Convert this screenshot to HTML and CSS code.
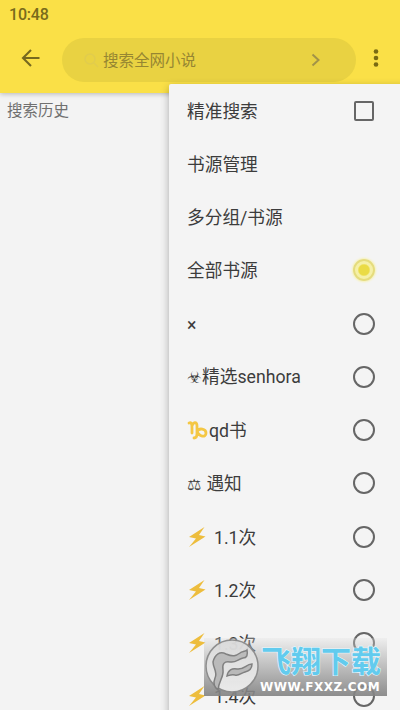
FILE: index.html
```html
<!DOCTYPE html>
<html lang="zh-CN">
<head>
<meta charset="utf-8">
<title>搜索</title>
<link rel="stylesheet" href="styles.css">
</head>
<body>
<div class="screen">
  <header class="header">
    <div class="status">10:48</div>
    <div class="toolbar">
      <svg class="back" viewBox="0 0 20 20"><path d="M18.500 10H2.500M10 2L2 10l8 8"/></svg>
      <div class="search">
        <svg class="glass" viewBox="0 0 16 16"><circle cx="7" cy="7" r="5"/><path d="M11 11l4 4"/></svg>
        <span class="hint">搜索全网小说</span>
        <svg class="go" viewBox="0 0 10 14"><path d="M1.500 1.500L7.500 7l-6 5.500"/></svg>
      </div>
      <svg class="more" viewBox="0 0 6 20"><circle cx="3" cy="3.500" r="2.300"/><circle cx="3" cy="10" r="2.300"/><circle cx="3" cy="16.500" r="2.300"/></svg>
    </div>
  </header>
  <div class="history">搜索历史</div>

  <div class="menu">
    <div class="item"><span>精准搜索</span><i class="check"></i></div>
    <div class="item"><span>书源管理</span></div>
    <div class="item"><span>多分组/书源</span></div>
    <div class="item"><span>全部书源</span><i class="radio on"></i></div>
    <div class="item"><span>×</span><i class="radio"></i></div>
    <div class="item"><span><span class="symbol">☣</span>精选senhora</span><i class="radio"></i></div>
    <div class="item"><svg class="capricorn" viewBox="0 0 21 20"><path d="M2 3C5 2 5 5 5 8v5M5 6C6 2 10 1 10 6v8c0 3-1 4-3 4M10 12c2-5 9-3 9 1 0 5-7 4-9-2"/></svg><span>qd书</span><i class="radio"></i></div>
    <div class="item"><span><span class="symbol">⚖</span> 遇知</span><i class="radio"></i></div>
    <div class="item"><svg class="bolt" viewBox="0 0 20 20"><path d="M17.500 0L2 10l7 1.500L2 20l16.500-10.500L12 8z"/></svg><span>1.1次</span><i class="radio"></i></div>
    <div class="item"><svg class="bolt" viewBox="0 0 20 20"><path d="M17.500 0L2 10l7 1.500L2 20l16.500-10.500L12 8z"/></svg><span>1.2次</span><i class="radio"></i></div>
    <div class="item"><svg class="bolt" viewBox="0 0 20 20"><path d="M17.500 0L2 10l7 1.500L2 20l16.500-10.500L12 8z"/></svg><span>1.3次</span><i class="radio"></i></div>
    <div class="item"><svg class="bolt" viewBox="0 0 20 20"><path d="M17.500 0L2 10l7 1.500L2 20l16.500-10.500L12 8z"/></svg><span>1.4次</span><i class="radio"></i></div>
  </div>

  <div class="badge">
    <svg class="emblem" viewBox="0 0 56 56">
      <defs><linearGradient id="disc" x1="0" y1="0" x2="0" y2="1"><stop offset="0" stop-color="#dadada"/><stop offset="1" stop-color="#efefef"/></linearGradient></defs>
      <circle cx="28" cy="28" r="26" fill="url(#disc)" stroke="#8b8b8b" stroke-width="1.500"/>
      <path class="wing" d="M9 24C11 16 16 13 22 16C29 19 32 18 36 15C38 13 41 14 43 12C44 17 43 20 39 20C34 21 32 25 26 24C20 23 18 26 19 32C20 39 15 42 14 52C10 49 9 45 11 40C14 34 9 30 9 24Z"/>
      <path class="wing" d="M23 38C24 32 28 30 33 31C40 32 42 26 48 26C48 31 45 33 41 34C37 35 35 38 31 37C28 36 26 37 23 38Z"/>
    </svg>
    <div class="brand"><div class="name">飞翔下载</div><div class="site">WWW.FXXZ.COM</div></div>
  </div>
</div>
</body>
</html>
```
FILE: styles.css
```css
* { box-sizing: border-box; }
body { margin: 0; background: #f3f3f3; font-family: Roboto, "Noto Sans CJK SC", sans-serif; }
.screen { position: relative; width: 400px; height: 710px; overflow: hidden; background: #f3f3f3; }
.header { height: 93px; background: #fae047; box-shadow: 0 1px 5px rgba(0,0,0,.25); }
.status { height: 38px; padding: 5px 0 0 9px; font-size: 16px; line-height: 19px; font-weight: 500; letter-spacing: -.2px; color: #796b1b; }
.toolbar { display: flex; align-items: center; height: 44px; padding-left: 21px; }
.back { width: 20px; height: 20px; margin: -4px 21px 0 0; fill: none; stroke: #76691f; stroke-width: 2.1; }
.search { display: flex; align-items: center; width: 294px; height: 44px; border-radius: 22px; padding-left: 21px; background: #e9d242; }
.glass { width: 16px; height: 16px; margin-right: 4px; fill: none; stroke: #e1cc4d; stroke-width: 1.5; }
.hint { width: 208px; padding-top: 1px; font-size: 15.5px; line-height: 22px; color: #968632; }
.go { width: 10px; height: 14px; fill: none; stroke: #a29348; stroke-width: 2; }
.more { width: 6px; height: 20px; margin: -4px 0 0 17px; fill: #796a13; }
.history { padding: 7px 7px; font-size: 15.5px; line-height: 23px; color: #707070; }
.menu { position: absolute; left: 169px; top: 84px; width: 240px; height: 640px; border-radius: 2px; background: #f4f4f4; box-shadow: 0 3px 9px rgba(0,0,0,.3); }
.item { display: flex; align-items: center; height: 53.25px; padding: 0 34px 0 18px; font-size: 17.7px; line-height: 24px; color: #3c3c3c; white-space: pre; }
.item > span { padding-top: 2px; }
.radio, .check { width: 22px; height: 22px; margin-left: auto; border: 2px solid #666; }
.radio { border-radius: 50%; }
.check { width: 20px; height: 20px; margin-right: 1px; border-radius: 2px; }
.on { border-color: #e5dc7c; background: radial-gradient(circle, #eadb45 0 5px, #f5f0a8 6.5px); box-shadow: 0 0 2px 1px #f7f2b4; }
.symbol { display: inline-block; width: 15px; font-family: "DejaVu Sans", sans-serif; font-size: 16px; }
.capricorn { width: 21px; height: 20px; margin-right: 1px; fill: none; stroke: #f4c744; stroke-width: 2.8; stroke-linecap: round; }
.bolt { width: 20px; height: 20px; margin-right: 7px; fill: #edbd3d; }
.badge { position: absolute; left: 204px; top: 638px; width: 183px; height: 58px; display: flex; background: linear-gradient(rgba(225,225,225,.3), rgba(132,132,132,.92)); }
.emblem { width: 56px; height: 56px; flex: none; opacity: .94; }
.wing { fill: #bababa; stroke: #7d7d7d; stroke-width: 1.5; }
.brand { flex: none; width: 127px; }
.name { height: 42px; padding-left: 1px; font: 700 30px/43px "Noto Sans CJK SC", sans-serif; color: #62cbee; -webkit-text-stroke: 1.2px #e9f9ff; paint-order: stroke fill; white-space: nowrap; }
.site { width: 124px; font: bold 12px/15px "DejaVu Sans", sans-serif; letter-spacing: .5px; color: #fff; white-space: nowrap; }
```
